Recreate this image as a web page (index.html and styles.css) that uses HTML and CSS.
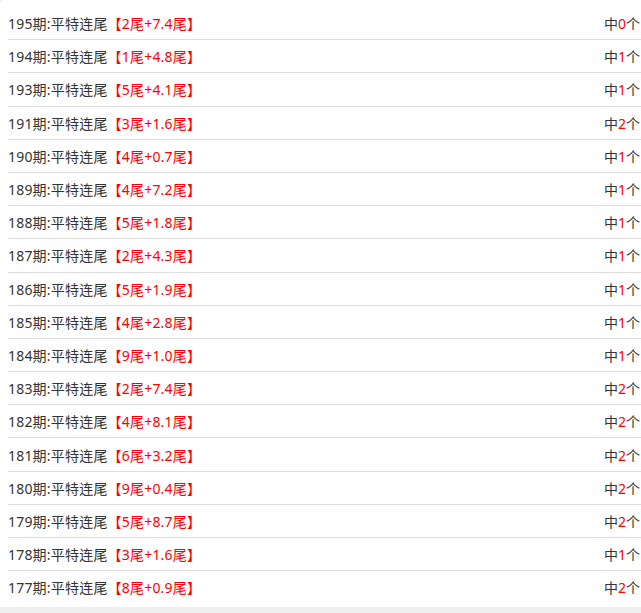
FILE: index.html
```html
<!DOCTYPE html>
<html lang="zh">
<head>
<meta charset="utf-8">
<link rel="stylesheet" href="styles.css">
</head>
<body>
<div class="card">
  <ul class="list">
    <li class="row"><span class="title">195期:平特连尾<span class="red">【2尾+7.4尾】</span></span><span class="hit">中<span class="red">0</span>个</span></li>
    <li class="row"><span class="title">194期:平特连尾<span class="red">【1尾+4.8尾】</span></span><span class="hit">中<span class="red">1</span>个</span></li>
    <li class="row"><span class="title">193期:平特连尾<span class="red">【5尾+4.1尾】</span></span><span class="hit">中<span class="red">1</span>个</span></li>
    <li class="row"><span class="title">191期:平特连尾<span class="red">【3尾+1.6尾】</span></span><span class="hit">中<span class="red">2</span>个</span></li>
    <li class="row"><span class="title">190期:平特连尾<span class="red">【4尾+0.7尾】</span></span><span class="hit">中<span class="red">1</span>个</span></li>
    <li class="row"><span class="title">189期:平特连尾<span class="red">【4尾+7.2尾】</span></span><span class="hit">中<span class="red">1</span>个</span></li>
    <li class="row"><span class="title">188期:平特连尾<span class="red">【5尾+1.8尾】</span></span><span class="hit">中<span class="red">1</span>个</span></li>
    <li class="row"><span class="title">187期:平特连尾<span class="red">【2尾+4.3尾】</span></span><span class="hit">中<span class="red">1</span>个</span></li>
    <li class="row"><span class="title">186期:平特连尾<span class="red">【5尾+1.9尾】</span></span><span class="hit">中<span class="red">1</span>个</span></li>
    <li class="row"><span class="title">185期:平特连尾<span class="red">【4尾+2.8尾】</span></span><span class="hit">中<span class="red">1</span>个</span></li>
    <li class="row"><span class="title">184期:平特连尾<span class="red">【9尾+1.0尾】</span></span><span class="hit">中<span class="red">1</span>个</span></li>
    <li class="row"><span class="title">183期:平特连尾<span class="red">【2尾+7.4尾】</span></span><span class="hit">中<span class="red">2</span>个</span></li>
    <li class="row"><span class="title">182期:平特连尾<span class="red">【4尾+8.1尾】</span></span><span class="hit">中<span class="red">2</span>个</span></li>
    <li class="row"><span class="title">181期:平特连尾<span class="red">【6尾+3.2尾】</span></span><span class="hit">中<span class="red">2</span>个</span></li>
    <li class="row"><span class="title">180期:平特连尾<span class="red">【9尾+0.4尾】</span></span><span class="hit">中<span class="red">2</span>个</span></li>
    <li class="row"><span class="title">179期:平特连尾<span class="red">【5尾+8.7尾】</span></span><span class="hit">中<span class="red">2</span>个</span></li>
    <li class="row"><span class="title">178期:平特连尾<span class="red">【3尾+1.6尾】</span></span><span class="hit">中<span class="red">1</span>个</span></li>
    <li class="row"><span class="title">177期:平特连尾<span class="red">【8尾+0.9尾】</span></span><span class="hit">中<span class="red">2</span>个</span></li>
  </ul>
</div>
</body>
</html>
```

FILE: styles.css
```css
html, body {
  margin: 0;
  padding: 0;
}
body {
  background: #efefef;
  font-family: "Noto Sans", "Noto Sans CJK SC", sans-serif;
  font-size: 14px;
  color: #333;
  width: 641px;
  height: 613px;
  overflow: hidden;
}
.card {
  background: #fff;
  border-radius: 5px 0 0 0;
  padding: 7px 0 4px;
}
.list {
  list-style: none;
  margin: 0 0 0 8px;
  padding: 0;
}
.row {
  display: flex;
  justify-content: space-between;
  align-items: center;
  height: 32.2px;
  border-bottom: 1px solid #ddd;
}
.row:last-child {
  border-bottom: none;
}
.title {
  white-space: nowrap;
  letter-spacing: 0.2px;
}
.hit {
  white-space: nowrap;
  margin-right: 1px;
}
.red {
  color: #f00;
}
```
